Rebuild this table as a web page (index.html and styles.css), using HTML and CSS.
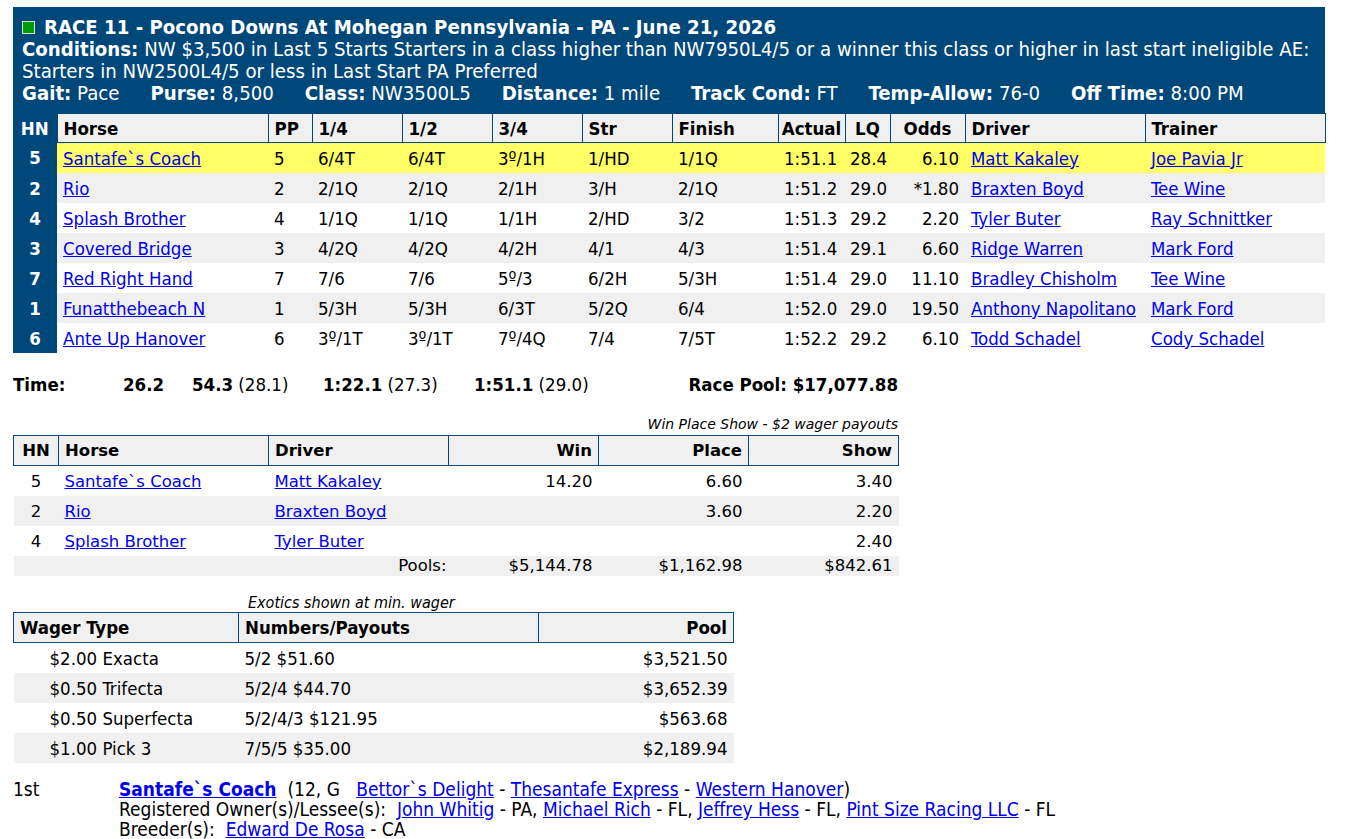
FILE: index.html
```html
<!DOCTYPE html>
<html lang="en">
<head>
<meta charset="utf-8">
<title>Race 11 - Pocono Downs</title>
<link rel="stylesheet" href="styles.css">
</head>
<body>
<div class="race">
  <div class="race-info">
    <div class="title"><span class="sq"></span>RACE 11 - Pocono Downs At Mohegan Pennsylvania - PA - June 21, 2026</div>
    <div class="cond"><b>Conditions:</b> NW $3,500 in Last 5 Starts Starters in a class higher than NW7950L4/5 or a winner this class or higher in last start ineligible AE:<br>Starters in NW2500L4/5 or less in Last Start PA Preferred</div>
    <div class="gait">
      <span><b>Gait:</b> Pace</span>
      <span><b>Purse:</b> 8,500</span>
      <span><b>Class:</b> NW3500L5</span>
      <span><b>Distance:</b> 1 mile</span>
      <span><b>Track Cond:</b> FT</span>
      <span><b>Temp-Allow:</b> 76-0</span>
      <span><b>Off Time:</b> 8:00 PM</span>
    </div>
  </div>
  <table class="results">
    <colgroup>
      <col class="c44"><col class="c211"><col class="c44"><col class="c90"><col class="c90"><col class="c90"><col class="c90"><col class="c106"><col class="c67"><col class="c45"><col class="c75"><col class="c180"><col class="c180">
    </colgroup>
    <thead>
      <tr>
        <th class="hn">HN</th><th>Horse</th><th>PP</th><th>1/4</th><th>1/2</th><th>3/4</th><th>Str</th><th>Finish</th><th class="ctr">Actual</th><th class="ctr">LQ</th><th class="ctr">Odds</th><th>Driver</th><th>Trainer</th>
      </tr>
    </thead>
    <tbody>
      <tr class="win"><td class="hn">5</td><td><a href="#">Santafe`s Coach</a></td><td>5</td><td>6/4T</td><td>6/4T</td><td>3º/1H</td><td>1/HD</td><td>1/1Q</td><td>1:51.1</td><td class="lq">28.4</td><td class="odds">6.10</td><td><a href="#">Matt Kakaley</a></td><td><a href="#">Joe Pavia Jr</a></td></tr>
      <tr class="alt"><td class="hn">2</td><td><a href="#">Rio</a></td><td>2</td><td>2/1Q</td><td>2/1Q</td><td>2/1H</td><td>3/H</td><td>2/1Q</td><td>1:51.2</td><td class="lq">29.0</td><td class="odds">*1.80</td><td><a href="#">Braxten Boyd</a></td><td><a href="#">Tee Wine</a></td></tr>
      <tr><td class="hn">4</td><td><a href="#">Splash Brother</a></td><td>4</td><td>1/1Q</td><td>1/1Q</td><td>1/1H</td><td>2/HD</td><td>3/2</td><td>1:51.3</td><td class="lq">29.2</td><td class="odds">2.20</td><td><a href="#">Tyler Buter</a></td><td><a href="#">Ray Schnittker</a></td></tr>
      <tr class="alt"><td class="hn">3</td><td><a href="#">Covered Bridge</a></td><td>3</td><td>4/2Q</td><td>4/2Q</td><td>4/2H</td><td>4/1</td><td>4/3</td><td>1:51.4</td><td class="lq">29.1</td><td class="odds">6.60</td><td><a href="#">Ridge Warren</a></td><td><a href="#">Mark Ford</a></td></tr>
      <tr><td class="hn">7</td><td><a href="#">Red Right Hand</a></td><td>7</td><td>7/6</td><td>7/6</td><td>5º/3</td><td>6/2H</td><td>5/3H</td><td>1:51.4</td><td class="lq">29.0</td><td class="odds">11.10</td><td><a href="#">Bradley Chisholm</a></td><td><a href="#">Tee Wine</a></td></tr>
      <tr class="alt"><td class="hn">1</td><td><a href="#">Funatthebeach N</a></td><td>1</td><td>5/3H</td><td>5/3H</td><td>6/3T</td><td>5/2Q</td><td>6/4</td><td>1:52.0</td><td class="lq">29.0</td><td class="odds">19.50</td><td><a href="#">Anthony Napolitano</a></td><td><a href="#">Mark Ford</a></td></tr>
      <tr><td class="hn">6</td><td><a href="#">Ante Up Hanover</a></td><td>6</td><td>3º/1T</td><td>3º/1T</td><td>7º/4Q</td><td>7/4</td><td>7/5T</td><td>1:52.2</td><td class="lq">29.2</td><td class="odds">6.10</td><td><a href="#">Todd Schadel</a></td><td><a href="#">Cody Schadel</a></td></tr>
    </tbody>
  </table>
</div>

<div class="times">
  <div class="t-label"><b>Time:</b></div>
  <div class="t-q1"><b>26.2</b></div>
  <div class="t-q2"><b>54.3</b> (28.1)</div>
  <div class="t-q3"><b>1:22.1</b> (27.3)</div>
  <div class="t-q4"><b>1:51.1</b> (29.0)</div>
  <div class="t-pool"><b>Race Pool: $17,077.88</b></div>
</div>

<div class="wps-cap">Win Place Show - $2 wager payouts</div>
<table class="wps">
  <colgroup><col class="w45"><col class="w210"><col class="w180"><col class="w150"><col class="w150"><col class="w150"></colgroup>
  <thead>
    <tr><th class="ctr">HN</th><th>Horse</th><th>Driver</th><th class="num">Win</th><th class="num">Place</th><th class="num">Show</th></tr>
  </thead>
  <tbody>
    <tr><td class="ctr">5</td><td><a href="#">Santafe`s Coach</a></td><td><a href="#">Matt Kakaley</a></td><td class="num">14.20</td><td class="num">6.60</td><td class="num">3.40</td></tr>
    <tr class="alt"><td class="ctr">2</td><td><a href="#">Rio</a></td><td><a href="#">Braxten Boyd</a></td><td class="num"></td><td class="num">3.60</td><td class="num">2.20</td></tr>
    <tr><td class="ctr">4</td><td><a href="#">Splash Brother</a></td><td><a href="#">Tyler Buter</a></td><td class="num"></td><td class="num"></td><td class="num">2.40</td></tr>
    <tr class="alt pools"><td colspan="3" class="pl-label">Pools:</td><td class="num">$5,144.78</td><td class="num">$1,162.98</td><td class="num">$842.61</td></tr>
  </tbody>
</table>

<div class="exo-cap">Exotics shown at min. wager</div>
<table class="exo">
  <colgroup><col class="e225"><col class="e300"><col class="e195"></colgroup>
  <thead>
    <tr><th>Wager Type</th><th>Numbers/Payouts</th><th class="num">Pool</th></tr>
  </thead>
  <tbody>
    <tr><td class="wt">$2.00 Exacta</td><td>5/2 $51.60</td><td class="num">$3,521.50</td></tr>
    <tr class="alt"><td class="wt">$0.50 Trifecta</td><td>5/2/4 $44.70</td><td class="num">$3,652.39</td></tr>
    <tr><td class="wt">$0.50 Superfecta</td><td>5/2/4/3 $121.95</td><td class="num">$563.68</td></tr>
    <tr class="alt"><td class="wt">$1.00 Pick 3</td><td>7/5/5 $35.00</td><td class="num">$2,189.94</td></tr>
  </tbody>
</table>

<div class="winner">
  <div class="place">1st</div>
  <div class="winfo">
    <div><a href="#" class="bold">Santafe`s Coach</a>&nbsp;&nbsp;(12, G&nbsp;&nbsp;&nbsp;<a href="#">Bettor`s Delight</a> - <a href="#">Thesantafe Express</a> - <a href="#">Western Hanover</a>)</div>
    <div>Registered Owner(s)/Lessee(s):&nbsp;&nbsp;<a href="#">John Whitig</a> - PA, <a href="#">Michael Rich</a> - FL, <a href="#">Jeffrey Hess</a> - FL, <a href="#">Pint Size Racing LLC</a> - FL</div>
    <div>Breeder(s):&nbsp;&nbsp;<a href="#">Edward De Rosa</a> - CA</div>
  </div>
</div>
</body>
</html>
```
FILE: styles.css
```css
body {
  margin: 7px 13px;
  font-family: "DejaVu Sans Condensed", "DejaVu Sans", sans-serif;
  font-size: 18.5px;
  color: #000;
  background: #fff;
}

a { color: #0000ee; text-decoration: underline; }

.race {
  width: 1312px;
  background: #00477a;
  color: #fff;
}

.race-info {
  padding: 9px 9px 9px 9px;
  line-height: 22px;
  font-size: 20.2px;
}

.title {
  font-weight: bold;
  display: flex;
  align-items: center;
}

.sq {
  display: inline-block;
  width: 11px;
  height: 11px;
  background: #009c00;
  border: 1px solid #cfe3cf;
  margin-right: 9px;
}

.gait {
  display: flex;
  gap: 31px;
}

.results {
  width: 1312px;
  border-collapse: collapse;
  table-layout: fixed;
}

.c44 { width: 44px; }
.c211 { width: 211px; }
.c90 { width: 90px; }
.c106 { width: 106px; }
.c67 { width: 67px; }
.c45 { width: 45px; }
.c75 { width: 75px; }
.c180 { width: 180px; }

.results th {
  height: 28px;
  padding: 0 6px;
  text-align: left;
  background: #f0f0f0;
  color: #000;
  border: 1px solid #00477a;
  font-weight: bold;
  white-space: nowrap;
}

.results th.hn {
  background: #00477a;
  color: #fff;
  text-align: center;
  border: none;
}

.results th.ctr { text-align: center; padding: 0 2px; }

.results td {
  height: 30px;
  padding: 0 6px;
  background: #fff;
  color: #000;
  white-space: nowrap;
  overflow: hidden;
}

.results tr.alt td { background: #f0f0f0; }
.results tr.win td { background: #ffff66; }

.results tr td.hn {
  background: #00477a;
  color: #fff;
  font-weight: bold;
  text-align: center;
}

.results td.lq { padding-left: 5px; }
.results td.odds { text-align: right; }

.times {
  width: 885px;
  display: flex;
  margin-top: 21px;
  line-height: 22px;
  white-space: nowrap;
}

.times > div { flex: 0 0 auto; }
.times > .t-label { flex-basis: 110px; }
.times > .t-q1 { flex-basis: 69px; }
.times > .t-q2 { flex-basis: 131px; }
.times > .t-q3 { flex-basis: 151px; }
.times > .t-pool { margin-left: auto; }

.wps-cap {
  width: 885px;
  text-align: right;
  font-family: "DejaVu Sans", sans-serif;
  font-style: italic;
  font-size: 14px;
  line-height: 18px;
  margin-top: 19px;
  margin-bottom: 2px;
}

.wps {
  width: 885px;
  border-collapse: collapse;
  table-layout: fixed;
  font-family: "DejaVu Sans", sans-serif;
  font-size: 16.5px;
}

.w45 { width: 45px; }
.w210 { width: 210px; }
.w180 { width: 180px; }
.w150 { width: 150px; }

.wps th {
  height: 29px;
  padding: 0 6px;
  text-align: left;
  background: #f0f0f0;
  border: 1px solid #00477a;
  font-weight: bold;
}

.wps td {
  height: 30px;
  padding: 0 6px;
  white-space: nowrap;
}

.wps .ctr { text-align: center; }
.wps .num { text-align: right; }
.wps tr.alt td { background: #f0f0f0; }
.wps tr.pools td { height: 20px; line-height: 20px; }
.wps td.pl-label { text-align: right; padding-right: 2px; }

.exo-cap {
  margin-top: 17px;
  padding-left: 235px;
  font-style: italic;
  font-size: 16px;
  line-height: 19px;
}

.exo {
  width: 720px;
  border-collapse: collapse;
  table-layout: fixed;
}

.e225 { width: 225px; }
.e300 { width: 300px; }
.e195 { width: 195px; }

.exo th {
  height: 29px;
  padding: 0 6px;
  text-align: left;
  background: #f0f0f0;
  border: 1px solid #00477a;
  font-weight: bold;
}

.exo td {
  height: 30px;
  padding: 0 6px;
  white-space: nowrap;
}

.exo .num { text-align: right; }
.exo td.wt { padding-left: 36px; }
.exo tr.alt td { background: #f0f0f0; }

.winner {
  display: flex;
  margin-top: 16px;
  line-height: 20px;
  font-size: 19px;
}

.place { width: 106px; flex: none; }

.winfo a.bold { font-weight: bold; }
```
